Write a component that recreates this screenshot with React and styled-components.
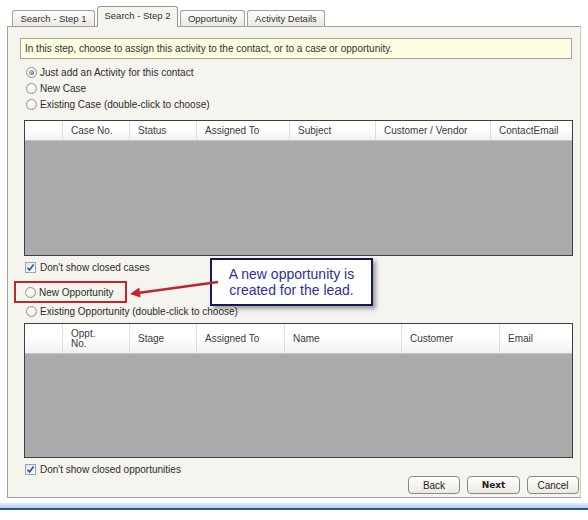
import React from 'react';
import styled, { createGlobalStyle, css } from 'styled-components';

const GlobalStyle = createGlobalStyle`
  html, body {
    margin: 0;
    padding: 0;
    background: #ffffff;
  }
  * {
    box-sizing: border-box;
  }
`;

const Screen = styled.div`
  position: relative;
  width: 588px;
  height: 520px;
  padding-top: 6px;
  overflow: hidden;
  background: #ffffff;
  font-family: 'Liberation Sans', Arial, sans-serif;
  font-size: 10px;
  color: #2b2b2b;
`;

const TabStrip = styled.div`
  position: relative;
  z-index: 1;
  display: flex;
  align-items: flex-end;
  gap: 2px;
  height: 20px;
  margin-left: 12px;
  font-size: 9.5px;
`;

const Tab = styled.div`
  display: flex;
  align-items: center;
  justify-content: center;
  width: ${({ $w }) => $w}px;
  height: 16px;
  border: 1px solid #a09f98;
  border-bottom: none;
  border-radius: 3px 3px 0 0;
  background: linear-gradient(#fdfdfb, #ebe9e1);
  color: #333;

  ${({ $active }) =>
    $active &&
    css`
      height: 21px;
      margin-bottom: -1px;
      padding-bottom: 3px;
      background: #f5f4ef;
      border-color: #97968f;
    `}
`;

const Panel = styled.div`
  position: relative;
  height: 472px;
  margin: 0 7px;
  padding: 11px 8px 0 12px;
  border: 1px solid #a3a29b;
  border-right-color: #c9c8c2;
  background: #f5f4ef;
`;

const InfoBar = styled.div`
  height: 21px;
  padding: 0 4px;
  border: 1px solid #a6a391;
  background: #fdfde2;
  line-height: 19px;
  color: #333;
`;

const Options = styled.div`
  margin-top: ${({ $top }) => $top || 0}px;
`;

const OptionRow = styled.div`
  display: flex;
  align-items: center;
  gap: 3px;
  height: 16px;
  padding-left: 6px;

  ${({ $highlight }) =>
    $highlight &&
    css`
      width: 113px;
      height: 22px;
      margin-left: -6px;
      padding-left: 9px;
      border: 2px solid #c0262c;
    `}
`;

const RadioDot = styled.span`
  position: relative;
  flex: none;
  width: 11px;
  height: 11px;
  border: 1px solid #929292;
  border-radius: 50%;
  background: radial-gradient(circle at 40% 35%, #ffffff, #e6e6e6);

  ${({ $checked }) =>
    $checked &&
    css`
      &::after {
        content: '';
        position: absolute;
        left: 2px;
        top: 2px;
        width: 5px;
        height: 5px;
        border-radius: 50%;
        background: radial-gradient(circle at 40% 35%, #c4c4c4, #666666);
      }
    `}
`;

const CheckRow = styled.div`
  display: flex;
  align-items: center;
  gap: 4px;
  height: 16px;
  margin-top: 3px;
  padding-left: 5px;
`;

const CheckBox = styled.span`
  display: flex;
  flex: none;
  align-items: center;
  justify-content: center;
  width: 11px;
  height: 11px;
  border: 1px solid #9aa4b0;
  background: linear-gradient(135deg, #dfe5ee, #ffffff);
`;

const Grid = styled.div`
  display: flex;
  flex-direction: column;
  height: ${({ $h }) => $h}px;
  margin: ${({ $top }) => $top}px -1px 0 4px;
  border: 1px solid #3f3f3f;
  background: #ababab;
`;

const GridHeader = styled.div`
  display: grid;
  grid-template-columns: ${({ $cols }) => $cols};
  height: ${({ $h }) => $h}px;
  border-bottom: 1px solid #c4c4c4;
  background: linear-gradient(#ffffff 45%, #f1f1f1);
`;

const HeaderCell = styled.div`
  display: flex;
  align-items: center;
  padding-left: 8px;
  border-left: 1px solid #dedede;
  color: #3a3a3a;
  line-height: 10px;
  white-space: pre-line;

  &:first-child {
    border-left: none;
  }
`;

const Footer = styled.div`
  display: flex;
  align-items: flex-start;
  justify-content: space-between;
  margin-right: -7px;
`;

const ButtonBar = styled.div`
  display: flex;
  gap: 7px;
  margin-top: 18px;
`;

const Button = styled.button`
  width: ${({ $w }) => $w || 52}px;
  height: 18px;
  padding: 0;
  border: 1px solid #8a8a84;
  border-radius: 4px;
  background: linear-gradient(#fefefd, #ece9df);
  font-family: ${({ $bold }) => ($bold ? "'DejaVu Sans', Verdana, sans-serif" : "'Liberation Sans', Arial, sans-serif")};
  font-size: ${({ $bold }) => ($bold ? 9 : 10)}px;
  font-weight: ${({ $bold }) => ($bold ? 700 : 400)};
  color: #222;
`;

const FrameEdge = styled.div`
  height: 7px;
  margin-top: 5px;
  border-bottom: 2px solid #34577c;
  background: linear-gradient(#e3eefa, #aecbeb);
`;

const Callout = styled.div`
  position: absolute;
  left: 202px;
  top: 231px;
  z-index: 2;
  width: 163px;
  height: 48px;
  padding-top: 6px;
  border: 2px solid #17175f;
  background: #ffffff;
  box-shadow: 3px 3px 4px rgba(0, 0, 0, 0.35);
  font-size: 14px;
  line-height: 16px;
  text-align: center;
  color: #2f2f9c;
`;

const Arrow = styled.svg`
  position: absolute;
  left: 118px;
  top: 249px;
  z-index: 2;
  overflow: visible;
`;

const Check = () => (
  <CheckBox>
    <svg width="9" height="9" viewBox="0 0 9 9">
      <path d="M1.5 4.8 L3.6 7 L7.6 1.6" fill="none" stroke="#2f4f96" strokeWidth="1.6" />
    </svg>
  </CheckBox>
);

const Option = ({ checked, highlight, children }) => (
  <OptionRow $highlight={highlight}>
    <RadioDot $checked={checked} />
    {children}
  </OptionRow>
);

const casesCols = '37px 67px 67px 93px 86px 115px 1fr';
const casesHead = ['', 'Case No.', 'Status', 'Assigned To', 'Subject', 'Customer / Vendor', 'ContactEmail'];
const oppCols = '37px 67px 67px 88px 117px 98px 1fr';
const oppHead = ['', 'Oppt.\nNo.', 'Stage', 'Assigned To', 'Name', 'Customer', 'Email'];

const tabs = [
  { label: 'Search - Step 1', w: 83 },
  { label: 'Search - Step 2', w: 81, active: true },
  { label: 'Opportunity', w: 65 },
  { label: 'Activity Details', w: 78 },
];

const App = () => (
  <Screen>
    <GlobalStyle />
    <TabStrip>
      {tabs.map((t) => (
        <Tab key={t.label} $w={t.w} $active={t.active}>
          {t.label}
        </Tab>
      ))}
    </TabStrip>

    <Panel>
      <InfoBar>
        In this step, choose to assign this activity to the contact, or to a case or opportunity.
      </InfoBar>

      <Options $top={5}>
        <Option checked>Just add an Activity for this contact</Option>
        <Option>New Case</Option>
        <Option>Existing Case (double-click to choose)</Option>
      </Options>

      <Grid $h={136} $top={8}>
        <GridHeader $cols={casesCols} $h={20}>
          {casesHead.map((h, i) => (
            <HeaderCell key={i}>{h}</HeaderCell>
          ))}
        </GridHeader>
      </Grid>

      <CheckRow>
        <Check />
        Don't show closed cases
      </CheckRow>

      <Options $top={6}>
        <Option highlight>New Opportunity</Option>
        <Option>Existing Opportunity (double-click to choose)</Option>
      </Options>

      <Grid $h={135} $top={4}>
        <GridHeader $cols={oppCols} $h={30}>
          {oppHead.map((h, i) => (
            <HeaderCell key={i}>{h}</HeaderCell>
          ))}
        </GridHeader>
      </Grid>

      <Footer>
        <CheckRow>
          <Check />
          Don't show closed opportunities
        </CheckRow>
        <ButtonBar>
          <Button>Back</Button>
          <Button $bold $w={53}>Next</Button>
          <Button>Cancel</Button>
        </ButtonBar>
      </Footer>

      <Callout>
        A new opportunity is
        <br />
        created for the lead.
      </Callout>

      <Arrow width="92" height="24" viewBox="0 0 92 24">
        <line x1="92" y1="6" x2="12" y2="17" stroke="#c0262c" strokeWidth="2.4" />
        <polygon points="4,18 14.6,21.6 13.2,11.6" fill="#c0262c" />
      </Arrow>
    </Panel>

    <FrameEdge />
  </Screen>
);

export default App;
